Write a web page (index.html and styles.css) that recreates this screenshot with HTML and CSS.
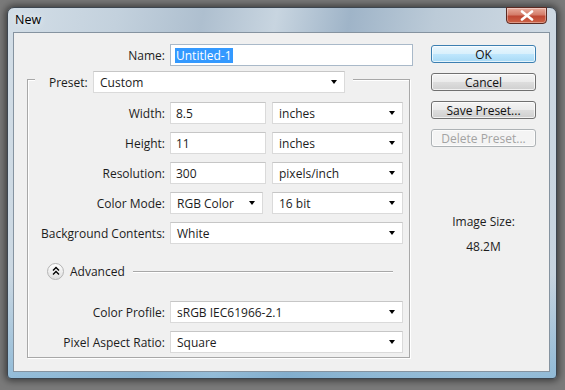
FILE: index.html
```html
<!DOCTYPE html>
<html lang="en">
<head>
  <meta charset="UTF-8">
  <title>New</title>
  <link rel="stylesheet" href="styles.css">
</head>
<body>
  <div class="window">
    <div class="titlebar">
      <span class="title">New</span>
      <span class="close-btn">
        <svg width="14" height="11" viewBox="0 0 14 11">
          <path d="M2 1.5 L12 9.5 M12 1.5 L2 9.5" stroke="#fff" stroke-width="2.6" stroke-linecap="round"/>
        </svg>
      </span>
    </div>

    <div class="client">
      <div class="main">
        <div class="name-row">
          <span class="label">Name:</span>
          <div class="field name-field"><span class="selected">Untitled-1</span></div>
        </div>

        <div class="group">
          <div class="preset-row">
            <span class="preset-label">Preset:</span>
            <div class="select preset-select">Custom<span class="arrow"></span></div>
          </div>

          <div class="form-grid">
            <span class="label">Width:</span>
            <div class="pair">
              <div class="field num">8.5</div>
              <div class="select unit">inches<span class="arrow"></span></div>
            </div>

            <span class="label">Height:</span>
            <div class="pair">
              <div class="field num">11</div>
              <div class="select unit">inches<span class="arrow"></span></div>
            </div>

            <span class="label">Resolution:</span>
            <div class="pair">
              <div class="field num">300</div>
              <div class="select unit">pixels/inch<span class="arrow"></span></div>
            </div>

            <span class="label">Color Mode:</span>
            <div class="pair">
              <div class="select mode">RGB Color<span class="arrow"></span></div>
              <div class="select unit">16 bit<span class="arrow"></span></div>
            </div>

            <span class="label">Background Contents:</span>
            <div class="select">White<span class="arrow"></span></div>
          </div>

          <div class="advanced">
            <span class="adv-icon">
              <svg width="10" height="10" viewBox="0 0 10 10">
                <path d="M2 4.5 L5 1.5 L8 4.5 M2 8.5 L5 5.5 L8 8.5" fill="none" stroke="#000" stroke-width="1.4"/>
              </svg>
            </span>
            <span class="adv-text">Advanced</span>
            <span class="adv-line"></span>
          </div>

          <div class="form-grid adv-grid">
            <span class="label">Color Profile:</span>
            <div class="select">sRGB IEC61966-2.1<span class="arrow"></span></div>

            <span class="label">Pixel Aspect Ratio:</span>
            <div class="select">Square<span class="arrow"></span></div>
          </div>
        </div>
      </div>

      <div class="side">
        <button class="btn btn-default">OK</button>
        <button class="btn">Cancel</button>
        <button class="btn">Save Preset...</button>
        <button class="btn" disabled>Delete Preset...</button>

        <div class="image-size">
          <div>Image Size:</div>
          <div class="size-value">48.2M</div>
        </div>
      </div>
    </div>
  </div>
</body>
</html>
```

FILE: styles.css
```css
* {
  margin: 0;
  padding: 0;
  box-sizing: border-box;
}

body {
  font-family: "Open Sans", "Noto Sans", Arial, sans-serif;
  font-size: 12px;
  color: #1c1c1c;
  background: #7a7a7a;
  width: 565px;
  height: 390px;
  overflow: hidden;
}

/* window frame */

.window {
  margin: 7px 0 0 7px;
  width: 550px;
  height: 372px;
  border: 1px solid #3d4650;
  border-radius: 7px 7px 4px 4px;
  box-shadow: 0 0 7px 2px rgba(0, 0, 0, 0.5);
  background:
    linear-gradient(to bottom, rgba(255, 255, 255, 0) 72%, rgba(110, 170, 210, 0.6) 100%),
    linear-gradient(100deg, #d3dee7 0%, #c3d1dd 18%, #aebfcf 32%, #c8d5e0 44%, #9fb4c8 56%, #bccbd8 70%, #ced9e3 88%, #c4d2de 100%);
  padding: 0 7px 6px 5px;
}

.titlebar {
  height: 24px;
  display: flex;
  justify-content: space-between;
  align-items: flex-start;
  padding-left: 2px;
}

.title {
  font-size: 12.5px;
  line-height: 16px;
  padding-top: 4px;
  color: #000;
  text-shadow: 0 0 6px rgba(255, 255, 255, 0.9);
}

.close-btn {
  width: 41px;
  height: 17px;
  margin-top: -1px;
  margin-right: 2px;
  border: 1px solid #5b2a22;
  border-radius: 0 0 4px 4px;
  background: linear-gradient(to bottom, #e8ab9c 0%, #d47d6a 45%, #bf4834 55%, #cd6346 100%);
  box-shadow: inset 0 0 0 1px rgba(255, 255, 255, 0.35);
  display: flex;
  align-items: center;
  justify-content: center;
}

/* client area */

.client {
  width: 537px;
  height: 340px;
  background: #f0f0f0;
  border: 1px solid #8593a0;
  display: flex;
  padding-top: 11px;
}

.main {
  width: 399px;
}

.label {
  text-align: right;
  align-self: center;
  white-space: nowrap;
}

.field,
.select {
  height: 22px;
  background: #fff;
  border: 1px solid #dadada;
  border-top-color: #c6c6c6;
  display: flex;
  align-items: center;
  padding: 0 5px 0 5px;
  white-space: nowrap;
}

.select {
  padding-left: 6px;
}

.arrow {
  margin-left: auto;
  width: 0;
  height: 0;
  border-left: 3.5px solid transparent;
  border-right: 3.5px solid transparent;
  border-top: 4px solid #000;
  margin-right: 2px;
}

.name-row {
  display: grid;
  grid-template-columns: 151px 243px;
  column-gap: 5px;
  height: 22px;
}

.name-field {
  border-color: #a9b9c9;
  padding-left: 4px;
}

.selected {
  background: #3399ff;
  color: #fff;
  padding: 0 1px;
  line-height: 15px;
}

/* preset group */

.group {
  margin: 13px 0 0 13px;
  width: 383px;
  border: 1px solid #a8a8a8;
  box-shadow: inset 1px 1px 0 #fff, 1px 1px 0 #fff;
  padding: 0 6px 4px 0;
}

.preset-row {
  margin: -9px 0 0 7px;
  width: 318px;
  height: 22px;
  display: flex;
  align-items: center;
  background: #f0f0f0;
  padding: 0 8px 0 14px;
}

.preset-label {
  width: 44px;
}

.preset-select {
  width: 252px;
}

.form-grid {
  margin-top: 9px;
  display: grid;
  grid-template-columns: 137px 233px;
  grid-auto-rows: 22px;
  column-gap: 5px;
  row-gap: 8px;
}

.pair {
  display: flex;
  justify-content: space-between;
}

.num {
  width: 96px;
}

.mode {
  width: 93px;
}

.unit {
  width: 131px;
}

.advanced {
  margin-top: 18px;
  height: 18px;
  display: flex;
  align-items: center;
  padding: 0 10px 0 19px;
}

.adv-icon {
  width: 17px;
  height: 17px;
  border-radius: 50%;
  border: 1px solid #b4b4b4;
  background: linear-gradient(to bottom, #ffffff, #dedede);
  display: flex;
  align-items: center;
  justify-content: center;
}

.adv-text {
  margin-left: 6px;
}

.adv-line {
  flex: 1;
  height: 1px;
  margin-left: 8px;
  background: #a8a8a8;
  box-shadow: 0 1px 0 #fff;
}

.adv-grid {
  margin-top: 21px;
}

/* buttons column */

.side {
  margin-left: 18px;
  width: 105px;
  display: flex;
  flex-direction: column;
  padding-top: 1px;
}

.btn {
  height: 18px;
  margin-bottom: 10px;
  font-family: inherit;
  font-size: 12px;
  color: #111;
  border: 1px solid #707070;
  border-radius: 3px;
  background: linear-gradient(to bottom, #f4f4f4 0%, #ebebeb 48%, #dddddd 52%, #cfcfcf 100%);
  box-shadow: inset 0 0 0 1px rgba(255, 255, 255, 0.7);
}

.btn-default {
  border-color: #3c7fb1;
  background: linear-gradient(to bottom, #eaf6fd 0%, #d9f0fc 48%, #bee6fd 52%, #a7d9f5 100%);
}

.btn:disabled {
  color: #a3a3a3;
  border-color: #adb2b5;
  background: #f4f4f4;
}

.image-size {
  margin-top: 57px;
  text-align: center;
  line-height: 16px;
}

.size-value {
  margin-top: 9px;
}
```
